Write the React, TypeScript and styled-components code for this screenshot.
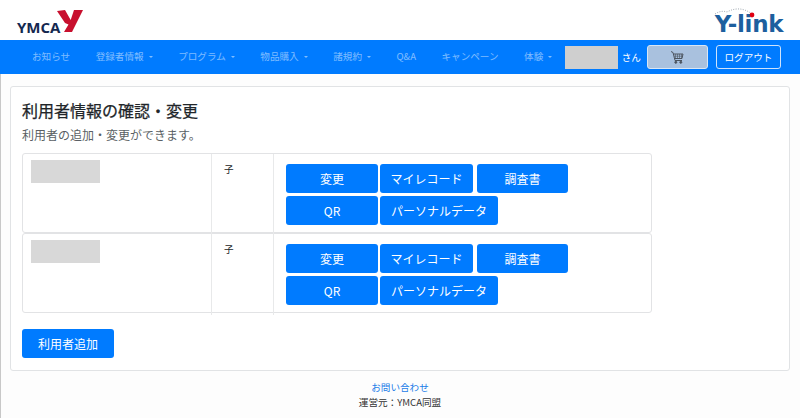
import React from "react";
import styled, { createGlobalStyle } from "styled-components";

const Global = createGlobalStyle`
  html, body { margin: 0; padding: 0; background: #fff; }
  body { font-family: "Noto Sans CJK JP", "Noto Sans", sans-serif; color: #212529; }
  * { box-sizing: border-box; }
`;
const Page = styled.div`
  width: 800px; height: 418px; overflow: hidden;
  background: #fdfdfd;
`;
const Header = styled.header`
  height: 40px; background: #fff; display: flex; justify-content: space-between;
  align-items: flex-end; padding: 0 15px 4px 17px;
`;
const LogoWrap = styled.div`
  position: relative; width: 70px; height: 28px; display: flex; align-items: flex-end;
`;
const LogoText = styled.span`
  font: 700 15px/17px "Open Sans", sans-serif; color: #14284f; letter-spacing: 0;
`;
const LogoMark = styled.svg`
  position: absolute; left: 39px; top: 0;
`;
const LinkWrap = styled.div`
  position: relative; width: 72px; height: 33px; display: flex; align-items: flex-end; justify-content: center;
`;
const LinkText = styled.span`
  font: 700 23px/24px "DejaVu Sans", sans-serif; color: #1d5f9e; letter-spacing: -0.3px;
  white-space: nowrap;
`;
const LinkArc = styled.svg`
  position: absolute; left: 0; top: 0;
`;
const Nav = styled.nav`
  height: 34px; background: #007bff; display: flex; align-items: center; padding: 0 19px 0 32px;
`;
const NavItem = styled.span<{ $caret?: boolean }>`
  font-size: 9.6px; color: rgba(255,255,255,.5); margin-right: 25.5px; padding-bottom: 2px;
  white-space: nowrap; line-height: 14px;
  ${p => p.$caret && `
    &::after {
      content: ""; display: inline-block; margin-left: 5px; vertical-align: 2px;
      border-top: 2px solid; border-left: 2px solid transparent; border-right: 2px solid transparent;
    }
  `}
`;
const NameBox = styled.div`
  width: 53px; height: 23px; background: #cfcfcf; margin-left: -13px; flex: none;
`;
const San = styled.span`
  font-size: 9.6px; font-weight: 400; color: #fff; margin: 0 6px 0 4px; white-space: nowrap; flex: none;
`;
const CartButton = styled.div`
  width: 61px; height: 24px; background: #a9c1de; border: 1px solid #d8e6f5; border-radius: 3px;
  display: flex; align-items: center; justify-content: center; flex: none;
`;
const LogoutButton = styled.div`
  width: 65px; height: 24px; margin-left: 8px; border: 1px solid #cfe3fb; border-radius: 3px; flex: none;
  color: #fff; font-size: 9.6px; display: flex; align-items: center; justify-content: center;
`;
const Main = styled.main`
  height: 344px; padding: 12px 10px 0 9px; border-left: 1px solid #c8c8c8;
`;
const Card = styled.section`
  height: 285px; background: #fff; border: 1px solid #e1e3e5; border-radius: 3px; padding: 11px 11px 0;
`;
const Title = styled.h1`
  margin: 0; font-size: 16px; line-height: 24px; font-weight: 400; color: #212529;
  -webkit-text-stroke: 0.25px #212529;
`;
const Subtitle = styled.p`
  margin: 4px 0 0; font-size: 12px; line-height: 18px; color: #5a5f64;
`;
const Rows = styled.div`
  width: 630px; margin-top: 9px;
`;
const Row = styled.div`
  height: 80px; border: 1px solid #e2e3e5; border-radius: 3px;
  display: grid; grid-template-columns: 188px 63px 1fr;
`;
const NameCell = styled.div`
  padding: 6px 8px;
`;
const Redacted = styled.div`
  width: 69px; height: 23px; background: #d8d8d8;
`;
const TypeCell = styled.div`
  border-left: 1px solid #e8e9ea; border-right: 1px solid #e8e9ea; padding: 8px 12px;
  font-size: 9.6px; line-height: 14px; color: #212529;
`;
const ActionCell = styled.div`
  padding: 10px 12px; display: flex; flex-wrap: wrap; align-content: flex-start; gap: 3px 2px;
`;
const Button = styled.button<{ $w: number; $gap?: number }>`
  width: ${p => p.$w}px; height: 29px; margin-right: ${p => p.$gap ?? 0}px; padding: 0;
  background: #007bff; border: 0; border-radius: 3px; color: #fff;
  font: 400 12px/29px "Noto Sans CJK JP", "Noto Sans", sans-serif; white-space: nowrap;
`;
const AddButton = styled(Button)`
  display: block; margin-top: 16px;
`;
const Footer = styled.footer`
  margin-top: 9px; text-align: center; font-size: 9.6px; line-height: 15px;
`;
const FooterLink = styled.div`
  color: #1b7ce8;
`;
const Operator = styled.div`
  color: #333;
`;

const Cart = () => (
  <svg width="14" height="14" viewBox="0 0 14 14" fill="none" stroke="#4c5560" strokeWidth="1">
    <path d="M1 1.5 L3 2.5 L5 10.5 H12" />
    <path d="M3.5 4 H13 L12 8.5 H4.5" />
    <path d="M5.5 4V8.5M7.5 4V8.5M9.5 4V8.5M11.5 4V8.5M4 6.2H12.5" strokeWidth=".6" />
    <circle cx="5.8" cy="12.3" r="1" fill="#4c5560" />
    <circle cx="10.8" cy="12.3" r="1" fill="#4c5560" />
  </svg>
);

const items: [string, boolean][] = [
  ["お知らせ", false], ["登録者情報", true], ["プログラム", true], ["物品購入", true],
  ["諸規約", true], ["Q&A", false], ["キャンペーン", false], ["体験", true],
];

const UserRow = () => (
  <Row>
    <NameCell><Redacted /></NameCell>
    <TypeCell>子</TypeCell>
    <ActionCell>
      <Button $w={92}>変更</Button>
      <Button $w={93} $gap={2}>マイレコード</Button>
      <Button $w={91}>調査書</Button>
      <Button $w={92}>QR</Button>
      <Button $w={118}>パーソナルデータ</Button>
    </ActionCell>
  </Row>
);

export default function App() {
  return (
    <Page>
      <Global />
      <Header>
        <LogoWrap>
          <LogoText>YMCA</LogoText>
          <LogoMark width="30" height="26" viewBox="0 0 30 26">
            <path d="M1 3 L9 2 L14.7 12 L18 2 H27 L16 24 H8 L12.5 16.5 L9 15 Z" fill="#c8102e" />
          </LogoMark>
        </LogoWrap>
        <LinkWrap>
          <LinkArc width="72" height="20" viewBox="0 0 72 20" fill="none">
            <path d="M2 11 Q8 7 14 9 Q27 2 39 11" stroke="#7f8a96" strokeWidth=".8" strokeDasharray="1 1.4" />
            <circle cx="39" cy="12" r="2.4" fill="#e00012" />
          </LinkArc>
          <LinkText>Y-link</LinkText>
        </LinkWrap>
      </Header>
      <Nav>
        {items.map(([t, c]) => <NavItem key={t} $caret={c}>{t}</NavItem>)}
        <NameBox />
        <San>さん</San>
        <CartButton><Cart /></CartButton>
        <LogoutButton>ログアウト</LogoutButton>
      </Nav>
      <Main>
        <Card>
          <Title>利用者情報の確認・変更</Title>
          <Subtitle>利用者の追加・変更ができます。</Subtitle>
          <Rows>
            <UserRow />
            <UserRow />
          </Rows>
          <AddButton $w={92}>利用者追加</AddButton>
        </Card>
        <Footer>
          <FooterLink>お問い合わせ</FooterLink>
          <Operator>運営元：YMCA同盟</Operator>
        </Footer>
      </Main>
    </Page>
  );
}
